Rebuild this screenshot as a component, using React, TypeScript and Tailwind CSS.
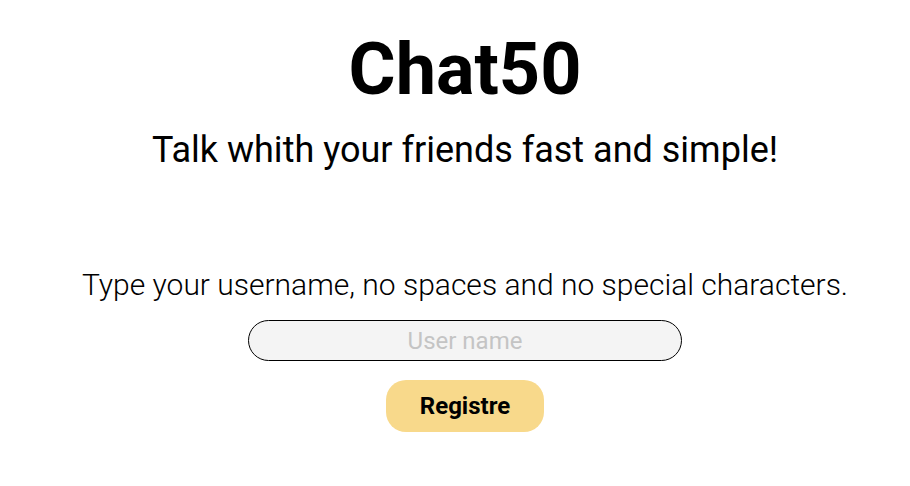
export default function App() {
  return (
    <div className="flex min-h-[486px] flex-col items-center bg-white pl-[20px] font-['Roboto',sans-serif] text-black">
      <h1 className="mt-[26px] text-[72px] font-bold leading-[88px]">Chat50</h1>
      <p className="mt-[15px] text-[36px] leading-[42px]">
        Talk whith your friends fast and simple!
      </p>
      <form
        className="mt-[96px] flex flex-col items-center"
        onSubmit={(e) => e.preventDefault()}
      >
        <label htmlFor="username" className="text-[30px] font-light leading-[36px]">
          Type your username, no spaces and no special characters.
        </label>
        <input
          id="username"
          type="text"
          placeholder="User name"
          className="mt-[17px] h-[41px] w-[434px] rounded-full border border-black bg-[#f4f4f4] text-center text-[24px] outline-none placeholder:text-[#c4c4c4]"
        />
        <button
          type="submit"
          className="mt-[19px] h-[52px] w-[158px] rounded-[20px] bg-[#f8d98b] text-[24px] font-bold"
        >
          Registre
        </button>
      </form>
    </div>
  );
}
